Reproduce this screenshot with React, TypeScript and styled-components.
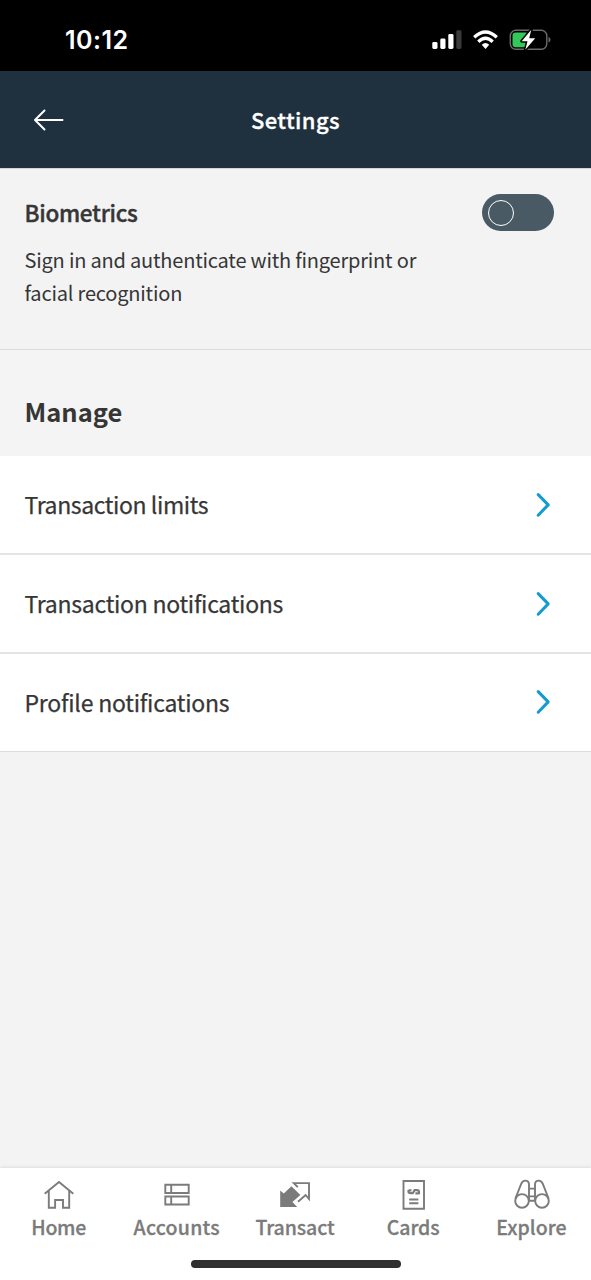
import React from "react";
import styled, { createGlobalStyle } from "styled-components";

const GlobalStyle = createGlobalStyle`
  * { box-sizing: border-box; }
  body { margin: 0; background: #f3f3f3; }
`;

const Screen = styled.div`
  display: flex;
  flex-direction: column;
  width: 591px;
  height: 1280px;
  overflow: hidden;
  background: #f3f3f3;
  color: #363636;
  font-family: "Noto Sans CJK SC", "Noto Sans", sans-serif;
`;

const StatusBar = styled.div`
  display: flex;
  flex: none;
  align-items: center;
  justify-content: space-between;
  height: 71px;
  padding: 8px 40px 0 65px;
  background: #000;
  color: #fff;
`;

const Clock = styled.time`
  font: 600 25px/30px Inter, sans-serif;
  letter-spacing: 0.5px;
`;

const StatusIcons = styled.div`
  display: flex;
  align-items: center;
  gap: 11px;
`;

const Header = styled.header`
  display: grid;
  flex: none;
  grid-template-columns: 64px 1fr 64px;
  align-items: center;
  height: 97px;
  background: #1f303e;
  color: #fff;
`;

const BackButton = styled.button`
  display: flex;
  justify-content: flex-end;
  padding: 0;
  border: 0;
  background: none;
  color: inherit;
`;

const Title = styled.h1`
  margin: 0 0 1px;
  text-align: center;
  font-size: 22px;
  line-height: 32px;
  font-weight: 500;
  letter-spacing: 0.4px;
  -webkit-text-stroke: 0.3px;
`;

const Biometrics = styled.section`
  display: flex;
  flex: none;
  justify-content: space-between;
  height: 182px;
  padding: 25px 37px 0 24.5px;
  border-bottom: 1px solid #dcdcdc;
  border-top: 1px solid #d4d5d9;
`;

const SettingName = styled.h2`
  margin: 1px 0 14px;
  font-size: 22.5px;
  line-height: 34px;
  font-weight: 500;
  letter-spacing: -0.3px;
  -webkit-text-stroke: 0.4px;
`;

const SettingText = styled.p`
  margin: 0;
  width: 410px;
  font-size: 20px;
  line-height: 33px;
  letter-spacing: -0.2px;
`;

const Switch = styled.button`
  display: flex;
  align-items: center;
  width: 72.5px;
  height: 37px;
  padding: 0 6px;
  border: 0;
  border-radius: 18.5px;
  background: #495a64;
`;

const Knob = styled.span`
  width: 26px;
  height: 26px;
  border: 1.6px solid #fff;
  border-radius: 50%;
`;

const GroupHeading = styled.h2`
  flex: none;
  height: 106px;
  margin: 0;
  padding: 41px 24.5px 0;
  font-size: 25.5px;
  line-height: 40px;
  font-weight: 700;
  background: #f4f4f4;
`;

const List = styled.div`
  display: flex;
  flex: none;
  flex-direction: column;
`;

const Row = styled.button`
  display: flex;
  align-items: center;
  justify-content: space-between;
  height: 99px;
  padding: 0 40px 0 24.5px;
  border: 0;
  border-bottom: 2px solid #e4e4e4;
  background: #fff;
  color: inherit;
  font-family: inherit;
  text-align: left;

  &:last-child {
    height: 98px;
    border-bottom: 1px solid #dcdcdc;
    padding-bottom: 1px;
  }
`;

const RowLabel = styled.span<{ $spacing: number }>`
  margin-bottom: 1px;
  font-size: 23px;
  line-height: 34px;
  letter-spacing: ${(p) => p.$spacing}px;
  -webkit-text-stroke: 0.25px;
`;

const TabBar = styled.nav`
  display: grid;
  flex: none;
  grid-template-columns: repeat(5, 1fr);
  height: 82px;
  margin-top: auto;
  background: #fff;
  box-shadow: 0 -1px 3px rgba(0, 0, 0, 0.09);
`;

const Tab = styled.button`
  display: flex;
  flex-direction: column;
  align-items: center;
  padding: 8px 0 0;
  border: 0;
  background: none;
  color: #7b7b7b;
  font-family: inherit;
`;

const TabLabel = styled.span<{ $spacing: number }>`
  margin: 1px 1px 0 0;
  font-size: 19.5px;
  line-height: 32px;
  font-weight: 500;
  letter-spacing: ${(p) => p.$spacing}px;
  -webkit-text-stroke: 0.3px;
  white-space: nowrap;
`;

const HomeStrip = styled.div`
  display: flex;
  flex: none;
  justify-content: center;
  height: 30px;
  padding-top: 10px;
  background: #fff;
`;

const HomeIndicator = styled.div`
  width: 210px;
  height: 8px;
  border-radius: 4px;
  background: #303030;
`;

const Signal = () => (
  <svg width="30" height="20" viewBox="0 0 30 20" fill="#fff">
    <rect x="0.3" y="12" width="5.2" height="7" rx="1.4" />
    <rect x="8.3" y="8.5" width="5.2" height="10.5" rx="1.4" />
    <rect x="16.3" y="4" width="5.2" height="15" rx="1.4" />
    <rect x="24.3" y="0.3" width="5.2" height="18.7" rx="1.4" fill="#3a3a3a" />
  </svg>
);

const Wifi = () => (
  <svg width="25" height="20" viewBox="0 0 25 20">
    <g fill="none" stroke="#fff" strokeWidth="3.3">
      <path d="M1.2 7.2Q12.5 -3.2 23.8 7.2" />
      <path d="M5.3 11.7Q12.5 5 19.7 11.7" />
    </g>
    <path d="M8.8 14.7Q12.5 11.5 16.2 14.7L12.5 19Z" fill="#fff" />
  </svg>
);

const Battery = () => (
  <svg width="42" height="22" viewBox="0 0 42 22">
    <rect x="1.3" y="1.3" width="36.5" height="19" rx="5.5" fill="none" stroke="#6b6b6b" strokeWidth="1.4" />
    <path d="M39.5 8Q41.5 8.5 41.5 10.8T39.5 13.6Z" fill="#6b6b6b" />
    <rect x="3.5" y="3.4" width="16" height="14.8" rx="3.3" fill="#34c759" />
    <path d="M22.3 .8L12.7 12.2H18.5L16.3 20.8L26.2 9.2H20.2Z" fill="#fff" stroke="#000" strokeWidth="3" paintOrder="stroke" strokeLinejoin="round" />
  </svg>
);

const BackArrow = () => (
  <svg width="31" height="22" viewBox="0 0 31 22" fill="none" stroke="#fff" strokeWidth="2" strokeLinecap="round" strokeLinejoin="round">
    <path d="M29.5 11H2M11.5 1.5L2 11L11.5 20.5" />
  </svg>
);

const Chevron = () => (
  <svg width="16" height="26" viewBox="0 0 16 26" fill="none" stroke="#149bd0" strokeWidth="3" strokeLinecap="round" strokeLinejoin="round">
    <path d="M3.2 2.6L13.2 12.9L3.2 23.2" />
  </svg>
);

const iconProps = {
  width: 36,
  height: 34,
  viewBox: "0 0 36 34",
  fill: "none",
  stroke: "currentColor",
  strokeWidth: 1.9,
};

const HomeIcon = () => (
  <svg {...iconProps}>
    <path d="M3.7 17.7L18 6L32.3 17.7M7.8 14.5V31.7H14.1V24H22V31.7H28.2V14.5" />
  </svg>
);

const AccountsIcon = () => (
  <svg {...iconProps}>
    <path d="M6.3 8.8H29.7V17H6.3ZM12.2 8.8V17M6.3 20.5H29.7V28.5H6.3ZM12.2 20.5V28.5" />
  </svg>
);

const TransactIcon = () => (
  <svg {...iconProps}>
    <path d="M3.2 14.4L6.8 17.5L14.4 10.3L23.4 19L15.4 26L20.2 31.1H3.2Z" fill="currentColor" stroke="none" />
    <path d="M20.8 11.2L16.8 7.1H32V23L28.6 19L21 25.8" />
  </svg>
);

const CardsIcon = () => (
  <svg {...iconProps}>
    <path d="M7.5 5H28V32.8H7.5Z" />
    <path d="M12.5 14V15.6Q12.5 17.2 14.4 17.2H16.8L18.6 14.2H21Q23 14.2 23 16V18.2M12.5 14.4H15.5M19.4 17.3H22.8" strokeWidth="2.2" />
    <path d="M13.2 23.5H22.4M13.2 27.3H22.4" />
  </svg>
);

const ExploreIcon = () => (
  <svg {...iconProps}>
    <circle cx="8" cy="24.9" r="6.8" />
    <circle cx="28" cy="24.9" r="6.8" />
    <path d="M1.4 22.5L7.3 7.7Q8.5 4.6 11.2 4.6Q15 4.6 15 8.5V24.9M34.6 22.5L28.7 7.7Q27.5 4.6 24.8 4.6Q21 4.6 21 8.5V24.9M15 12.6H21M15 20.4H21M15 24.7H21" />
  </svg>
);

const rows = [
  { label: "Transaction limits", spacing: -0.4 },
  { label: "Transaction notifications", spacing: -0.27 },
  { label: "Profile notifications", spacing: -0.22 },
];

const tabs = [
  { label: "Home", spacing: -0.3, Icon: HomeIcon },
  { label: "Accounts", spacing: 0.25, Icon: AccountsIcon },
  { label: "Transact", spacing: -0.1, Icon: TransactIcon },
  { label: "Cards", spacing: -0.1, Icon: CardsIcon },
  { label: "Explore", spacing: 0, Icon: ExploreIcon },
];

export default function App() {
  return (
    <Screen>
      <GlobalStyle />
      <StatusBar>
        <Clock>10:12</Clock>
        <StatusIcons>
          <Signal />
          <Wifi />
          <Battery />
        </StatusIcons>
      </StatusBar>
      <Header>
        <BackButton aria-label="Back">
          <BackArrow />
        </BackButton>
        <Title>Settings</Title>
      </Header>
      <Biometrics>
        <div>
          <SettingName>Biometrics</SettingName>
          <SettingText>
            Sign in and authenticate with fingerprint or facial recognition
          </SettingText>
        </div>
        <Switch role="switch" aria-checked={false} aria-label="Biometrics">
          <Knob />
        </Switch>
      </Biometrics>
      <GroupHeading>Manage</GroupHeading>
      <List>
        {rows.map(({ label, spacing }) => (
          <Row key={label}>
            <RowLabel $spacing={spacing}>{label}</RowLabel>
            <Chevron />
          </Row>
        ))}
      </List>
      <TabBar>
        {tabs.map(({ label, spacing, Icon }) => (
          <Tab key={label}>
            <Icon />
            <TabLabel $spacing={spacing}>{label}</TabLabel>
          </Tab>
        ))}
      </TabBar>
      <HomeStrip>
        <HomeIndicator />
      </HomeStrip>
    </Screen>
  );
}
